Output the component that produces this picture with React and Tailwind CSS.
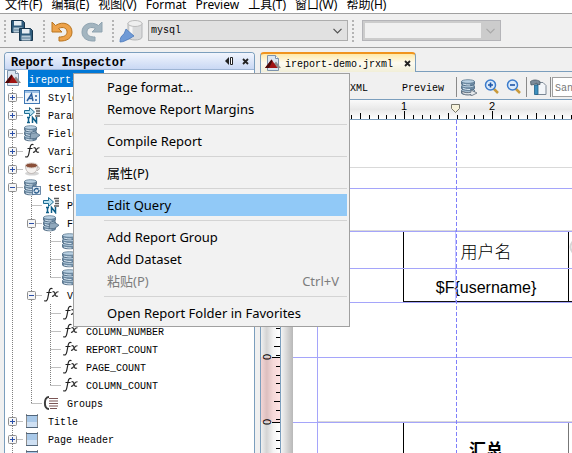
import React from "react";

const MONO = "font-['Liberation_Mono',monospace]";

/* ---------- icons ---------- */

function ReportIcon({ className = "" }) {
  return (
    <svg width="16" height="16" viewBox="0 0 16 16" className={`shrink-0 ${className}`}>
      <path d="M2.500 .5h8l3 3v12h-11z" fill="#dbe6f1" stroke="#7d93ab" />
      <path d="M10.500 .5v3h3" fill="#fff" stroke="#7d93ab" />
      <path d="M5 13 11 6.500 16 13z" fill="#8d8d8d" />
      <path d="M0 13 6.500 4.500 12.500 13z" fill="#a01414" />
      <path d="M0 13 6.500 4.500 7.500 6 4 13z" fill="#4a0a0a" />
    </svg>
  );
}

function Discs({ wide = 11 }) {
  const c = 0.5 + wide / 2;
  return (
    <g>
      {[10, 5.5, 1].map((top) => (
        <g key={top}>
          <path
            d={`M.5 ${top + 1.5}v2.500c0 2.400 ${wide} 2.400 ${wide} 0v-2.500z`}
            fill="#6d8ba5"
            stroke="#46627b"
            strokeWidth=".8"
          />
          <path d={`M2 ${top + 4}q${c / 2} 1.200 ${c} 1`} fill="none" stroke="#dbe8f2" />
          <ellipse cx={c} cy={top + 1.5} rx={wide / 2} ry="1.800" fill="#b9d0e2" stroke="#5c7890" strokeWidth=".8" />
        </g>
      ))}
    </g>
  );
}

function Icon({ kind }) {
  switch (kind) {
    case "style":
      return (
        <svg width="16" height="16" viewBox="0 0 16 16">
          <rect x=".5" y="1.500" width="15" height="13" fill="#eef4fb" stroke="#3f78b5" />
          <path d="M1 3h14" stroke="#9cc0e6" strokeWidth="2" />
          <path d="M3 12 7.500 5 9 12M4.500 9.500h4" fill="none" stroke="#2c5f9e" strokeWidth="1.500" />
          <path d="M12 6v2M12 10v2" stroke="#2c5f9e" strokeWidth="1.500" />
        </svg>
      );
    case "param":
      return (
        <svg width="17" height="17" viewBox="0 0 17 17">
          <path d="M.5 3.500h5v-3l5 4.500-5 4.500v-3h-5z" fill="#b9e2f2" stroke="#1d6c92" />
          <path d="M11 1.500h5M12 4h4M12 6.500h4M11 9h5" stroke="#5a5a5a" strokeWidth="1.300" />
          <path d="M3 10.500h3M4.500 10.500v5M3 15.500h3M8.500 16v-5.500l4 5v-5.500" fill="none" stroke="#0f5f88" strokeWidth="1.500" />
        </svg>
      );
    case "fields":
      return (
        <svg width="17" height="17" viewBox="0 0 17 17">
          <Discs wide={12} />
          <path d="M7 7.500c2 1 3 .5 5 .2l4 2.500-4 3c-2 .6-4 .6-6 .3z" fill="#90a8bc" stroke="#4c6880" strokeWidth=".8" />
        </svg>
      );
    case "field":
      return (
        <svg width="17" height="17" viewBox="0 0 17 17">
          <Discs wide={14} />
        </svg>
      );
    case "dataset":
      return (
        <svg width="17" height="17" viewBox="0 0 17 17">
          <Discs wide={12} />
          <rect x="8.500" y="7.500" width="8" height="8" fill="#dfeaf4" stroke="#4c6f93" strokeWidth=".8" />
          <path d="M10 12.500c0-3 3-4 4.500-2M15 11c0 3-3 4-4.500 2" fill="none" stroke="#2c5f8e" strokeWidth="1.400" />
        </svg>
      );
    case "fx":
      return (
        <svg width="17" height="16" viewBox="0 0 17 16">
          <path d="M9.500 1.800C7.500 .8 6.500 2 6 5L4.800 11c-.6 3-1.800 3.500-3.500 2.600M3.500 5.500h5" fill="none" stroke="#222" strokeWidth="1.200" />
          <path d="M9.500 5c1.500-.8 2 .2 2.500 2s1.200 2.800 3 2M15.500 4.800c-2-.4-2.500 1-3.500 2.400S10.500 9.600 9 9.300" fill="none" stroke="#333" strokeWidth="1.200" />
        </svg>
      );
    case "cup":
      return (
        <svg width="17" height="16" viewBox="0 0 17 16">
          <ellipse cx="8" cy="12.500" rx="7" ry="2" fill="#d5d5d5" />
          <path d="M1.500 5c0 10 12 10 12 0z" fill="#f4f1ef" stroke="#b3aaa6" strokeWidth=".8" />
          <path d="M13 6c3-1 3 3 0 3.500" fill="none" stroke="#b3aaa6" />
          <ellipse cx="7.500" cy="4.500" rx="6" ry="2.500" fill="#8a4f38" stroke="#d8cdc8" />
        </svg>
      );
    case "group":
      return (
        <svg width="16" height="16" viewBox="0 0 16 16">
          <path d="M6 2C.5 2 .5 14 6 14" fill="none" stroke="#3c3c3c" strokeWidth="2" />
          <path d="M6 3.500h9M6 6h9M6 8.500h9M6 11h9M7 13.500h7" stroke="#7a5555" strokeWidth="1.200" />
        </svg>
      );
    default:
      return (
        <svg width="16" height="16" viewBox="0 0 16 16">
          <rect x="2" y="2" width="12" height="12" fill="#a9c9e9" />
          <path d="M2 9h12v5H2z" fill="#cfe0f3" />
          <path d="M2.500 1v14M13.500 1v14" stroke="#8c8c8c" />
          <path d="M2 2.500h12M2 14.500h12" stroke="#51667c" />
        </svg>
      );
  }
}

function SaveAllIcon() {
  const disk = (
    <>
      <path d="M.5 .5h11l2 2v10h-13z" fill="#2f5c7c" stroke="#17354c" />
      <rect x="3" y="1" width="7.500" height="4.500" fill="#e5edf2" />
      <rect x="2.500" y="7.500" width="9" height="5" fill="#b7cbd8" />
      <path d="M3 10h8" stroke="#5a7d95" />
    </>
  );
  return (
    <svg width="24" height="24" viewBox="0 0 24 24">
      <g transform="translate(1 1)">{disk}</g>
      <g transform="translate(9 9)">{disk}</g>
    </svg>
  );
}

function TurnIcon({ flip, fill, stroke }) {
  return (
    <svg width="24" height="24" viewBox="0 0 24 24" className={flip ? "-scale-x-100" : ""}>
      <path
        d="M2 3v10h10l-3.500-3.500c5-2.500 9 0 8.500 4-.4 3.300-3.500 4.500-8 4.500v4c8 .5 13-3 13-9C22 5 13 1.500 5.500 6.500z"
        fill={fill}
        stroke={stroke}
        strokeLinejoin="round"
      />
    </svg>
  );
}

function ConnectionIcon() {
  return (
    <svg width="25" height="24" viewBox="0 0 25 24">
      <path d="M9 4v14c0 4 14 4 14 0V4z" fill="#d9dadb" stroke="#b3b5b7" />
      <path d="M12 7v12" stroke="#f6f6f6" strokeWidth="3" />
      <ellipse cx="16" cy="4.500" rx="7" ry="3" fill="#efefef" stroke="#bcbcbc" />
      <path d="M1 23c0-4 1-6 4-8l2-5 8 7-5 3c-3 1-5 3-9 3z" fill="#6f9ad6" stroke="#4a78ba" strokeWidth=".8" />
    </svg>
  );
}

function DatabaseArrowIcon() {
  return (
    <svg width="17" height="17" viewBox="0 0 17 17">
      <Discs wide={13} />
      <path d="M1 12c2 2 6 2 9 1.200V11l6 3-6 3v-1.500c-4 .8-7 .3-9-1.500z" fill="#e4e8eb" stroke="#5e6b78" strokeWidth=".8" />
    </svg>
  );
}

function LensIcon({ plus }) {
  return (
    <svg width="16" height="16" viewBox="0 0 16 16">
      <path d="M9.500 9.500 14 14" stroke="#c99a3c" strokeWidth="2.500" />
      <circle cx="6.500" cy="6" r="5" fill="#dcebfb" stroke="#3c7ccc" strokeWidth="1.500" />
      <path d={plus ? "M4 6h5M6.500 3.500v5" : "M4 6h5"} stroke="#1e56a8" strokeWidth="1.600" />
    </svg>
  );
}

function ToolsIcon() {
  return (
    <svg width="17" height="17" viewBox="0 0 17 17">
      <path d="M6 3.500h7l3 3v9H6z" fill="#f3f6f9" stroke="#7b8794" />
      <path d="M.5 2.500C3 .5 7 .5 10 2.500v3H7V4L4 5.500 1 6z" fill="#7b8b99" stroke="#4a5865" strokeWidth=".8" />
      <path d="M4.500 6h3.500v9.500H4.500z" fill="#3d8fbd" stroke="#1f5f86" strokeWidth=".8" />
    </svg>
  );
}

/* ---------- top bars ---------- */

const MENUS = ["文件(F)", "编辑(E)", "视图(V)", "Format", "Preview", "工具(T)", "窗口(W)", "帮助(H)"];

function MenuBar() {
  return (
    <nav className="flex h-[14px] shrink-0 gap-[9px] border-b border-[#a0a0a0] bg-white pl-[5px] text-[12px] leading-[9px] text-black">
      {MENUS.map((m) => (
        <button key={m} type="button" className="h-[9px] whitespace-nowrap">
          {m}
        </button>
      ))}
    </nav>
  );
}

function Grip() {
  return <span className="h-[22px] w-0 shrink-0 border-l-2 border-dotted border-[#b4b4b4]" />;
}

function Combo({ label, value, disabled, className }) {
  return (
    <span className={`relative flex h-[21px] items-center border ${className}`}>
      <select
        aria-label={label}
        disabled={disabled}
        defaultValue={value}
        className={`h-full w-full appearance-none bg-transparent pl-[2px] text-[10px] text-black ${MONO}`}
      >
        <option value={value}>{value}</option>
      </select>
      <svg width="9" height="6" viewBox="0 0 9 6" className="pointer-events-none absolute right-[5px]">
        <path d="M.5 .8 4.500 4.800 8.500 .8" fill="none" stroke={disabled ? "#a8a8a8" : "#505050"} strokeWidth="1.200" />
      </svg>
    </span>
  );
}

function MainToolbar() {
  return (
    <div className="flex h-[34px] shrink-0 items-center border-b border-[#a0a0a0] bg-[#f0f0f0] pl-1">
      <Grip />
      <button type="button" aria-label="Save all" className="ml-1 mr-[9px]">
        <SaveAllIcon />
      </button>
      <Grip />
      <button type="button" aria-label="Undo" className="ml-[5px]">
        <TurnIcon fill="#eda24a" stroke="#b8741f" />
      </button>
      <button type="button" aria-label="Redo" className="ml-[6px] mr-2">
        <TurnIcon flip fill="#a3b5c0" stroke="#8fa3b0" />
      </button>
      <Grip />
      <button type="button" aria-label="Connections" className="ml-[5px] mr-1">
        <ConnectionIcon />
      </button>
      <Combo label="Connection" value="mysql" className="w-[200px] border-[#adadad] bg-[#e1e1e1]" />
      <span className="ml-1 mr-2 flex">
        <Grip />
      </span>
      <span className="flex w-[139px] bg-[#cccccc]">
        <Combo
          label="Zoom"
          value=""
          disabled
          className="w-full border-[#b4b4b8] bg-[linear-gradient(#f0f0f0,#f0f0f0)] bg-[length:116px_15px] bg-[position:2px_2px] bg-no-repeat"
        />
      </span>
    </div>
  );
}

/* ---------- report inspector ---------- */

const TREE = [
  { d: 1, box: "+", icon: "style", label: "Styles" },
  { d: 1, box: "+", icon: "param", label: "Parameters" },
  { d: 1, box: "+", icon: "fields", label: "Fields" },
  { d: 1, box: "+", icon: "fx", label: "Variables" },
  { d: 1, box: "+", icon: "cup", label: "Scriptlets" },
  { d: 1, box: "-", icon: "dataset", label: "test" },
  { d: 2, icon: "param", label: "Parameters" },
  { d: 2, box: "-", icon: "fields", label: "Fields" },
  { d: 3, icon: "field", label: "" },
  { d: 3, icon: "field", label: "" },
  { d: 3, icon: "field", label: "", last: true },
  { d: 2, box: "-", icon: "fx", label: "Variables" },
  { d: 3, icon: "fx", label: "" },
  { d: 3, icon: "fx", label: "COLUMN_NUMBER" },
  { d: 3, icon: "fx", label: "REPORT_COUNT" },
  { d: 3, icon: "fx", label: "PAGE_COUNT" },
  { d: 3, icon: "fx", label: "COLUMN_COUNT", last: true },
  { d: 2, icon: "group", label: "Groups", last: true },
  { d: 1, box: "+", icon: "band", label: "Title" },
  { d: 1, box: "+", icon: "band", label: "Page Header" },
  { d: 1, box: "+", icon: "band", label: "" },
];

function Gutter({ d, box, last }) {
  const x = 7.5 + 19 * (d - 1);
  return (
    <svg width={19 * d} height="18" className="shrink-0">
      <g stroke="#808080" strokeDasharray="1 1">
        {Array.from({ length: d }, (_, i) => (
          <path key={i} d={`M${7.5 + 19 * i} 0V${last && i === d - 1 ? 10 : 18}`} />
        ))}
        <path d={`M${x} 9.500H${19 * d - 1}`} />
      </g>
      {box && (
        <g>
          <rect x={x - 4} y="5.500" width="8" height="8" rx="1" fill="#f6f6f6" stroke="#8f8f8f" />
          <path d={`M${x - 2.5} 9.500h5${box === "+" ? `M${x} 7v5` : ""}`} stroke="#2b4fa8" />
        </g>
      )}
    </svg>
  );
}

function Inspector() {
  return (
    <section className="flex w-[251px] shrink-0 flex-col overflow-hidden rounded-t border border-b-0 border-[#7b9ebd] bg-white">
      <header className="flex h-[17px] shrink-0 items-end justify-between border-b border-[#9db4d4] bg-gradient-to-b from-[#f1f5fd] to-[#c9d8f4] pl-[6px] pr-[5px]">
        <h2 className={`text-[12px] font-bold leading-[12px] text-black ${MONO}`}>Report Inspector</h2>
        <span className="flex items-center gap-2 pb-1">
          <button type="button" aria-label="Minimize">
            <svg width="9" height="8" viewBox="0 0 9 8" className="block">
              <path d="M4 0v8L0 4z" fill="#222" />
              <path d="M5.500 .5h2v7h-2z" fill="#fff" stroke="#222" />
            </svg>
          </button>
          <button type="button" aria-label="Close">
            <svg width="7" height="7" viewBox="0 0 7 7" className="block">
              <path d="M1 1l5 5M6 1 1 6" stroke="#222" strokeWidth="1.800" />
            </svg>
          </button>
        </span>
      </header>
      <ul className={`text-[10px] leading-[18px] text-black ${MONO}`}>
        <li className="flex h-[18px] items-start">
          <ReportIcon />
          <span className="ml-[7px] h-[17px] bg-[#0078d7] pl-px pr-[3px] leading-[21px] text-white">ireport-demo</span>
        </li>
        {TREE.map((n, i) => (
          <li key={i} className="flex h-[18px] items-center whitespace-nowrap">
            <Gutter d={n.d} box={n.box} last={n.last} />
            <span className="flex w-6 shrink-0">
              <Icon kind={n.icon} />
            </span>
            <span className="pt-1">{n.label}</span>
          </li>
        ))}
      </ul>
    </section>
  );
}

/* ---------- editor ---------- */

const STEP = 8.8;

function HorizontalRuler() {
  const ticks = Array.from({ length: 200 }, (_, i) => i);
  return (
    <div className="h-5 shrink-0 overflow-hidden border-b border-[#7b9ebd] bg-gradient-to-b from-[#fafafa] via-[#e8e8e8] to-white">
      <svg width="100%" height="19" className="block">
        {ticks.map((i) => {
          const h = i % 10 === 0 ? 8 : i % 5 === 0 ? 6 : 4;
          return <rect key={i} x={Math.round(56 + i * STEP - 1)} y={19 - h} width="1" height={h} fill="#000" />;
        })}
        {[1, 2, 3, 4, 5, 6].map((n) => (
          <text key={n} x={56 + n * 88 - 1} y="10" textAnchor="middle" fontSize="11" fontFamily="Liberation Sans, sans-serif">
            {n}
          </text>
        ))}
        <path d="M190.500 4.500h8v4l-4 4-4-4z" fill="#f7f3dc" stroke="#77776a" />
      </svg>
    </div>
  );
}

function VerticalRuler() {
  const bands = [
    { from: 68, to: 182 },
    { from: 182, to: 237 },
    { from: 237, to: 302 },
    { from: 302, to: 420 },
  ];
  return (
    <div className="w-5 shrink-0 overflow-hidden border-r border-[#7b9ebd] bg-[linear-gradient(to_right,#f0f0f0,#d4d4d4_30%,#f4f4f4_65%,#ffffff)]">
      <svg width="19" height="420" className="block">
        <rect x="0" y="237" width="19" height="65" fill="#ff7070" fillOpacity=".2" />
        {bands.map((b) =>
          Array.from({ length: Math.ceil((b.to - b.from) / STEP) }, (_, i) => {
            const w = i === 0 ? 8 : i % 5 === 0 ? 6 : 4;
            return <rect key={`${b.from}-${i}`} x={19 - w} y={Math.round(b.from + i * STEP)} width={w} height="1" fill="#000" />;
          })
        )}
        {[237, 302].map((y) => (
          <text
            key={y}
            transform={`translate(10 ${y + 3}) rotate(-90)`}
            fontSize="11"
            fontFamily="Liberation Sans, sans-serif"
          >
            0
          </text>
        ))}
      </svg>
    </div>
  );
}

function DesignCanvas() {
  return (
    <div className="relative min-w-0 flex-1 overflow-hidden bg-white">
      <div className="h-full w-3 bg-gradient-to-r from-[#f4f4f4] to-[#b8b8b8]" />
      <div className="absolute left-[122px] top-[111px] flex h-[71px] w-[166px] flex-col border border-black text-center text-black">
        <div className="h-[37px] font-['Noto_Sans_CJK_SC',sans-serif] text-[17px] font-light leading-[38px]">用户名</div>
        <div className="font-['Liberation_Sans',sans-serif] text-[16px] leading-[38px]">$F{"{username}"}</div>
      </div>
      <div className="absolute left-[287px] top-[111px] h-[71px] w-[166px] border border-black" />
      <div className="absolute left-[122px] top-[302px] h-[71px] w-[166px] border border-black text-center font-['Noto_Sans_CJK_SC',sans-serif] text-[17px] font-bold leading-[52px] text-black">
        汇总
      </div>
      <div className="absolute left-[287px] top-[302px] h-[71px] w-[166px] border border-[#777777]" />
      <svg width="100%" height="100%" className="pointer-events-none absolute inset-0">
        <g fill="#d9d9d9">
          <rect x="36" y="47" width="100%" height="1" />
          <rect x="36" y="110" width="100%" height="1" />
          <rect x="36" y="301" width="100%" height="1" />
        </g>
        <g fill="#a5a5fa">
          {[68, 111, 148, 182, 237, 302].map((y) => (
            <rect key={y} x="12" y={y} width="100%" height="1" />
          ))}
          <rect x="36" y="0" width="1" height="100%" />
        </g>
        <path d="M122 181.500h600" stroke="#111" />
        <path d="M174.500 110v72" stroke="#8080ff" strokeOpacity=".45" />
        <path d="M175.500 0v500" stroke="#8080fa" strokeDasharray="4 2" />
        <path d="M292 121q-5 6 0 12" fill="none" stroke="#d6d6d6" strokeWidth="2" />
      </svg>
    </div>
  );
}

function Editor() {
  const divider = <span className="h-[20px] w-px shrink-0 bg-[#8a8a8a]" />;
  return (
    <section className="flex min-w-0 flex-1 flex-col">
      <div className="flex h-5 shrink-0">
        <div className="flex w-[156px] shrink-0 items-center rounded-t border-x border-t-2 border-x-[#7b9ebd] border-t-[#f0941e] bg-gradient-to-b from-[#ffe9a8] via-[#fdfbf0] to-[#f1eed8] pl-1">
          <ReportIcon />
          <span className={`ml-1 whitespace-nowrap pt-[3px] text-[10px] leading-[14px] text-black ${MONO}`}>ireport-demo.jrxml</span>
          <button type="button" aria-label="Close tab" className="ml-[11px]">
            <svg width="7" height="7" viewBox="0 0 7 7" className="block">
              <path d="M1 1l5 5M6 1 1 6" stroke="#222" strokeWidth="1.800" />
            </svg>
          </button>
        </div>
        <div className="flex-1 border-b border-[#7b9ebd]" />
      </div>
      <div className="flex min-h-0 flex-1 flex-col border-l border-[#7b9ebd]">
        <div className={`flex h-[28px] shrink-0 items-center overflow-hidden border-b border-[#7b9ebd] bg-[#f0f0f0] pl-[89px] pt-[3px] text-[10px] text-black ${MONO}`}>
          <button type="button" className="pt-[3px]">XML</button>
          <button type="button" className="ml-[34px] mr-[12px] pt-[3px]">Preview</button>
          {divider}
          <span className="mx-[4px] flex shrink-0 items-center gap-[6px]">
            <button type="button" aria-label="Query"><DatabaseArrowIcon /></button>
            <button type="button" aria-label="Zoom in"><LensIcon plus /></button>
            <button type="button" aria-label="Zoom out"><LensIcon /></button>
          </span>
          {divider}
          <button type="button" aria-label="Tools" className="mx-[3px] shrink-0"><ToolsIcon /></button>
          {divider}
          <input
            aria-label="Font"
            defaultValue="SansSerif"
            className="ml-[1px] h-[20px] w-[120px] shrink-0 border border-[#a0a0a0] bg-white pl-[2px] pt-[2px] text-[#777777]"
          />
        </div>
        <HorizontalRuler />
        <div className="flex min-h-0 flex-1">
          <VerticalRuler />
          <DesignCanvas />
        </div>
      </div>
    </section>
  );
}

/* ---------- context menu ---------- */

const ITEMS = [
  { text: "Page format..." },
  { text: "Remove Report Margins" },
  null,
  { text: "Compile Report" },
  null,
  { text: "属性(P)" },
  null,
  { text: "Edit Query", active: true },
  null,
  { text: "Add Report Group" },
  { text: "Add Dataset" },
  { text: "粘贴(P)", keys: "Ctrl+V", disabled: true },
  null,
  { text: "Open Report Folder in Favorites" },
];

function ContextMenu() {
  return (
    <div role="menu" className="absolute left-[73px] top-[73px] w-[277px] border border-[#a0a0a0] bg-[#f2f2f2] p-[2px] text-[13px] text-black">
      {ITEMS.map((it, i) =>
        it ? (
          <button
            key={i}
            type="button"
            role="menuitem"
            disabled={it.disabled}
            className={`flex h-[22px] w-full items-center justify-between whitespace-nowrap pl-[31px] pr-2 pt-[2px] ${
              it.active ? "bg-[#91c9f7]" : ""
            } ${it.disabled ? "text-[#7d7d7d]" : ""}`}
          >
            <span>{it.text}</span>
            {it.keys && <span>{it.keys}</span>}
          </button>
        ) : (
          <div key={i} role="separator" className="ml-7 h-[10px] pt-1">
            <div className="h-px bg-[#d4d4d4]" />
          </div>
        )
      )}
    </div>
  );
}

export default function App() {
  return (
    <div className="relative flex h-screen flex-col overflow-hidden bg-[#f0f0f0] font-['Noto_Sans','Noto_Sans_CJK_SC',sans-serif]">
      <MenuBar />
      <MainToolbar />
      <div className="flex min-h-0 flex-1 gap-[5px] pl-1 pt-1">
        <Inspector />
        <Editor />
      </div>
      <ContextMenu />
    </div>
  );
}
